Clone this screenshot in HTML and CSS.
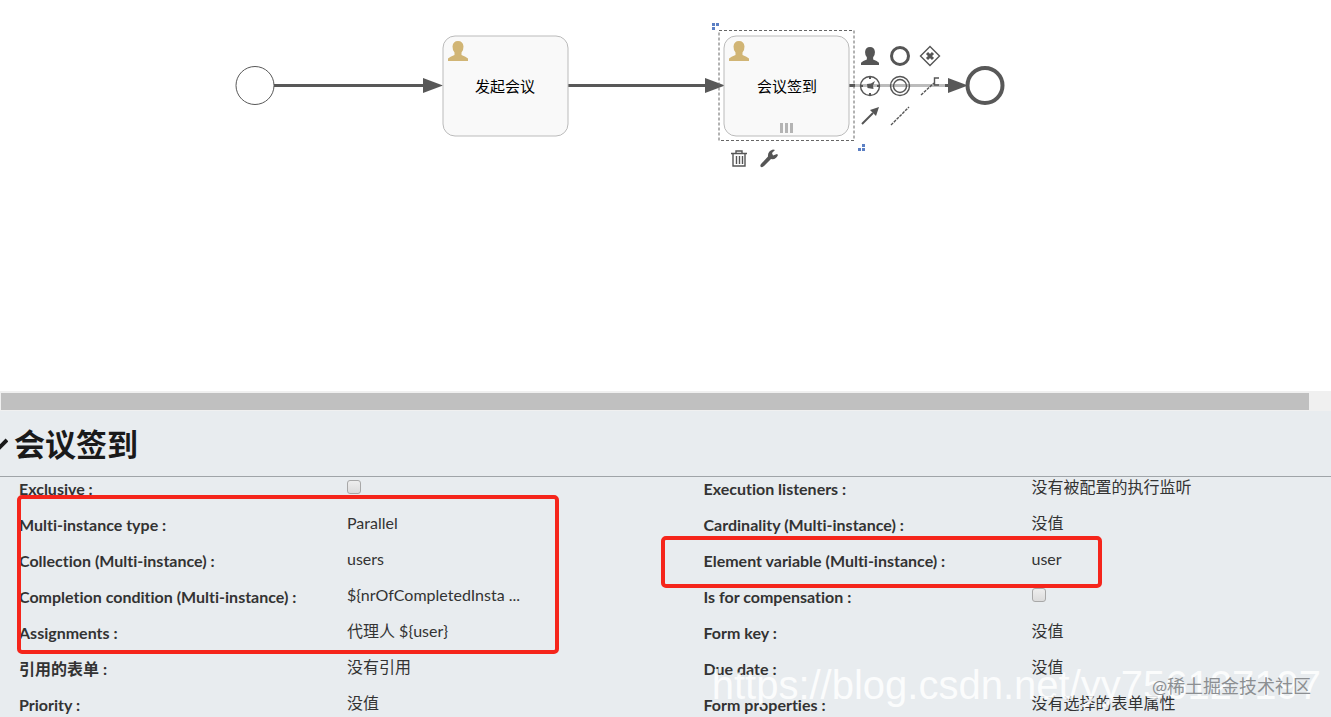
FILE: index.html
```
<!DOCTYPE html>
<html lang="zh-CN">

<head>
    <meta charset="utf-8">
    <meta name="viewport" content="width=device-width, initial-scale=1">
    <title>会议签到</title>
    <link rel="stylesheet" href="styles.css">
</head>

<body>
    <main class="canvas">
        <svg class="diagram" width="1040" height="190">
            <defs>
                <path id="user" d="M0 20V17.5Q2 15.500 6.500 14V11.500Q4.500 9.500 4.500 5.500Q5 0 10 0Q15 0 15.500 5.500Q15.500 9.500 13.500 11.500V14Q18 15.500 20 17.500V20Z" />
                <path id="arrow" d="M0 -7.500L20 0L0 7.500Z" />
            </defs>
            <g class="flow">
                <path d="M274 85.500H425M567 85.500H707M849 85.500H950" />
                <use href="#arrow" x="423" y="85.500" />
                <use href="#arrow" x="705" y="85.500" />
                <use href="#arrow" x="948" y="85.500" />
            </g>
            <circle class="start" cx="255" cy="85.500" r="19" />
            <circle class="end" cx="985" cy="85.500" r="17.500" />
            <rect class="task" x="443" y="36" width="125" height="100" rx="12" />
            <rect class="task" x="724" y="36" width="125" height="100" rx="12" />
            <use class="task-icon" href="#user" x="448" y="41" />
            <use class="task-icon" href="#user" x="729" y="41" />
            <text class="task-name" x="505" y="92">发起会议</text>
            <text class="task-name" x="787" y="92">会议签到</text>
            <path class="parallel" d="M781.500 123V133M786.500 123V133M791.500 123V133" />
            <rect class="selection" x="719" y="30.500" width="135" height="110" />
            <path class="resizer" d="M712 23h3v3h-3zM716 23h3v3h-3zM712 27h3v3h-3zM862 144h3v3h-3zM858 148h3v3h-3zM862 148h3v3h-3z" />
        </svg>

        <div class="pad pad-append">
            <button type="button" aria-label="User task"><svg width="30" height="30"><use href="#user" transform="translate(6 6) scale(.9)" /></svg></button>
            <button type="button" aria-label="End event"><svg width="30" height="30"><circle class="line thick" cx="15" cy="15" r="8.500" /></svg></button>
            <button type="button" aria-label="Gateway"><svg width="30" height="30"><path class="line" d="M15 5.500L24.500 15L15 24.500L5.500 15Z" /><path class="line thick" d="M12 12L18 18M18 12L12 18" /></svg></button>
            <button type="button" aria-label="Timer event"><svg width="30" height="30"><circle class="line" cx="15" cy="15" r="9.500" /><path class="line bold" d="M15 5v3M15 22v3M5 15h3M22 15h3" /><path d="M12 13L16 12.500L20 10L18 14.500L18.500 18L12.500 17Z" /></svg></button>
            <button type="button" aria-label="Intermediate event"><svg width="30" height="30"><circle class="line" cx="15" cy="15" r="9.500" /><circle class="line" cx="15" cy="15" r="6.500" /></svg></button>
            <button type="button" aria-label="Text annotation"><svg width="30" height="30"><path class="line dashed" d="M6 24L19 12" /><path class="line" d="M24 7H19.500V14H24" /></svg></button>
            <button type="button" aria-label="Sequence flow"><svg width="30" height="30"><path class="line bold" d="M7 23L18 12" /><path d="M24 6L21 15L15 9Z" /></svg></button>
            <button type="button" aria-label="Association"><svg width="30" height="30"><path class="line dashed" d="M6 24L24 6" /></svg></button>
        </div>
        <div class="pad pad-edit">
            <button type="button" aria-label="Delete"><svg width="30" height="30"><path class="line" d="M7 10.500H23M12 10V8H18V10M9 11V23H21V11M12.500 13V21M15.500 13V21M18.500 13V21" /></svg></button>
            <button type="button" aria-label="Change type"><svg width="30" height="30"><path d="M7 21L14 13.500Q13.500 8 19 6.500L21 7L18 10L19 12.500L23 11L24 12Q22 17 17 16L10 23Q8 25 6.500 23.500Q6 22.500 7 21Z" /></svg></button>
        </div>
    </main>

    <div class="scrollbar">
        <div class="thumb"></div>
    </div>

    <section class="properties">
        <h1 class="title">
            <svg width="8" height="16"><path d="M-6 4L0 11L7 4" /></svg>
            会议签到
        </h1>
        <div class="columns">
            <dl class="list">
                <dt><label for="exclusive">Exclusive :</label></dt>
                <dd><input class="check" type="checkbox" id="exclusive"></dd>
                <dt>Multi-instance type :</dt>
                <dd>Parallel</dd>
                <dt>Collection (Multi-instance) :</dt>
                <dd>users</dd>
                <dt>Completion condition (Multi-instance) :</dt>
                <dd>${nrOfCompletedInsta ...</dd>
                <dt>Assignments :</dt>
                <dd>代理人 ${user}</dd>
                <dt>引用的表单 :</dt>
                <dd>没有引用</dd>
                <dt>Priority :</dt>
                <dd>没值</dd>
            </dl>
            <dl class="list">
                <dt>Execution listeners :</dt>
                <dd>没有被配置的执行监听</dd>
                <dt>Cardinality (Multi-instance) :</dt>
                <dd>没值</dd>
                <dt>Element variable (Multi-instance) :</dt>
                <dd>user</dd>
                <dt><label for="compensation">Is for compensation :</label></dt>
                <dd><input class="check" type="checkbox" id="compensation"></dd>
                <dt>Form key :</dt>
                <dd>没值</dd>
                <dt>Due date :</dt>
                <dd>没值</dd>
                <dt>Form properties :</dt>
                <dd>没有选择的表单属性</dd>
            </dl>
            <div class="mark mark-left"></div>
            <div class="mark mark-right"></div>
        </div>
        <div class="watermark">https://blog.csdn.net/yy756127197</div>
        <div class="credit">@稀土掘金技术社区</div>
    </section>
</body>

</html>
```
FILE: styles.css
```
* {
    box-sizing: border-box;
}

body {
    display: flex;
    flex-direction: column;
    margin: 0;
    height: 100vh;
    overflow: hidden;
    color: #333;
    background-color: white;
    font-family: Lato, "Noto Sans CJK SC", sans-serif;
    font-size: 16px;
    font-variant-ligatures: none;
}

/* diagram */
.canvas {
    position: relative;
    flex: 1;
    overflow: hidden;
}

.diagram {
    display: block;
}

.flow {
    fill: #585858;
}

.flow > path {
    stroke: #585858;
    stroke-width: 3;
}

.start,
.end {
    fill: white;
    stroke: #585858;
}

.end {
    stroke-width: 4;
}

.task {
    fill: #f9f9f9;
    stroke: #bbb;
}

.task-icon {
    fill: #d1b575;
}

.task-name {
    fill: black;
    font-size: 15px;
    text-anchor: middle;
}

.parallel {
    stroke: #b4b4b4;
    stroke-width: 3;
}

.selection {
    fill: none;
    stroke: #666;
    stroke-dasharray: 3 2;
}

.resizer {
    fill: #5b7fc4;
}

/* buttons round the selected task */
.pad {
    position: absolute;
    display: grid;
    grid-template-columns: repeat(3, 30px);
}

.pad-append {
    left: 855px;
    top: 41px;
    background-color: rgba(255, 255, 255, 0.6);
}

.pad-edit {
    left: 724px;
    top: 143px;
}

.pad button {
    padding: 0;
    height: 30px;
    border-style: none;
    background-color: transparent;
}

.pad svg {
    display: block;
    fill: #555;
}

.pad .line {
    fill: none;
    stroke: #555;
    stroke-width: 1.4;
}

.pad .bold {
    stroke-width: 2;
}

.pad .thick {
    stroke-width: 3;
}

.pad .dashed {
    stroke-dasharray: 3 1;
}

.scrollbar {
    padding: 2px 22px 1px 1px;
    height: 20px;
    background-color: #f0f0f0;
}

.thumb {
    height: 17px;
    background-color: #c0c0c0;
}

/* properties */
.properties {
    position: relative;
    height: 306px;
    overflow: hidden;
    background-color: #e8ecef;
}

.title {
    display: flex;
    align-items: center;
    gap: 6px;
    margin: 0;
    height: 66px;
    border-bottom: 1px solid #9fa4a8;
    color: #1a1a1a;
    font-size: 31px;
    line-height: 40px;
}

.title svg {
    fill: none;
    stroke: #1a1a1a;
    stroke-width: 4;
}

.columns {
    position: relative;
    display: grid;
    grid-template-columns: 12fr 11fr;
    padding-left: 19px;
}

.list {
    display: grid;
    grid-template-columns: 328px 1fr;
    grid-auto-rows: 36px;
    margin: 0;
}

.list dt {
    font-weight: bold;
    line-height: 24px;
}

.list dd {
    margin: 0;
    line-height: 20px;
}

.check {
    display: block;
    appearance: none;
    margin: 3px 0;
    width: 14px;
    height: 14px;
    border: 1px solid #a8a8a8;
    border-radius: 3px;
    background-image: linear-gradient(#eee, #dcdcdc);
}

.mark {
    position: absolute;
    border: 4px solid #f5251b;
    border-radius: 5px;
}

.mark-left {
    left: 17px;
    top: 18px;
    width: 542px;
    height: 159px;
}

.mark-right {
    left: 661px;
    top: 59px;
    width: 441px;
    height: 52px;
}

.watermark {
    position: absolute;
    right: 10px;
    bottom: 8px;
    color: rgba(255, 255, 255, 0.85);
    font-family: "Liberation Sans", sans-serif;
    font-size: 40px;
    line-height: 48px;
}

.credit {
    position: absolute;
    right: 20px;
    bottom: 19px;
    color: #8c8f92;
    font-size: 18px;
    line-height: 24px;
}
```
